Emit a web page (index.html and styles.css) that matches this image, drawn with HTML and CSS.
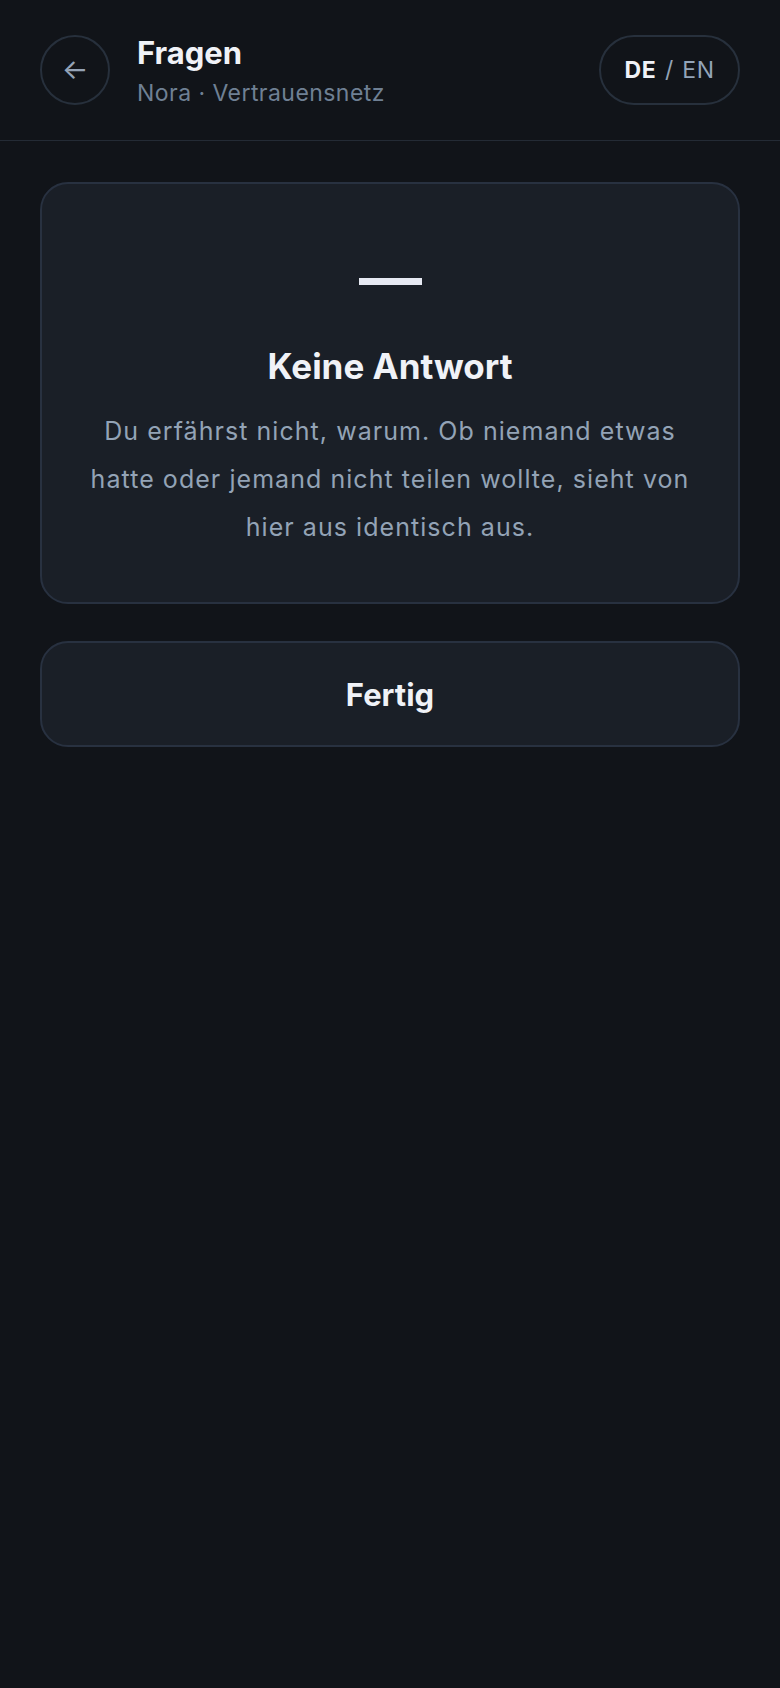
FILE: index.html
```html
<!DOCTYPE html>
<html lang="de">
<head>
    <meta charset="UTF-8">
    <title>Fragen</title>
    <link rel="stylesheet" href="styles.css">
</head>
<body>

<!-- ===================== KOPFZEILE ===================== -->
<header class="topbar">
    <button class="back-btn" aria-label="Zurück">←</button>
    <div class="title-block">
        <h1>Fragen</h1>
        <p class="subtitle">Nora · Vertrauensnetz</p>
    </div>
    <button class="lang-switch"><b>DE</b> / EN</button>
</header>

<!-- ===================== INHALT ===================== -->
<main class="content">
    <div class="card">
        <div class="dash"></div>
        <h2>Keine Antwort</h2>
        <p>Du erfährst nicht, warum. Ob niemand etwas hatte oder jemand nicht teilen wollte, sieht von hier aus identisch aus.</p>
    </div>
    <button class="done-btn">Fertig</button>
</main>

</body>
</html>
```

FILE: styles.css
```css
body {
    margin: 0;
    background: #111419;
    color: #f0f2f7;
    font-family: Inter, "Noto Sans", sans-serif;
    min-height: 1688px;
}

button { font-family: inherit; cursor: pointer; }

.topbar {
    display: flex;
    align-items: center;
    gap: 27px;
    padding: 33px 40px;
    border-bottom: 1px solid #242b35;
}

.back-btn {
    width: 70px;
    height: 70px;
    flex: none;
    border-radius: 50%;
    border: 2px solid #27303c;
    background: transparent;
    color: #95a3b6;
    font-size: 28px;
    line-height: 1;
    padding: 0 0 2px;
}

.title-block { flex: 1; }
.title-block h1 { margin: 0; font-size: 31px; line-height: 40px; font-weight: 700; }
.subtitle { margin: 6px 0 0; font-size: 23px; line-height: 28px; letter-spacing: 0.45px; color: #6f8094; }

.lang-switch {
    height: 70px;
    padding: 0 23px;
    border-radius: 35px;
    border: 2px solid #27303c;
    background: transparent;
    color: #93a4b8;
    font-size: 23px;
    letter-spacing: 0.8px;
    word-spacing: 1px;
}
.lang-switch b { color: #f0f2f7; font-weight: 700; }

.content {
    padding: 41px 40px;
    display: flex;
    flex-direction: column;
    gap: 37px;
}

.card {
    background: #1a1f27;
    border: 2px solid #283140;
    border-radius: 28px;
    padding: 47px 44px 51px;
    text-align: center;
}

.dash {
    width: 63px;
    height: 7px;
    background: #e6e9f2;
    margin: 47px auto 61px;
}

.card h2 { margin: 0; font-size: 35px; line-height: 40px; font-weight: 700; }
.card p { margin: 21px 0 0; font-size: 25px; line-height: 48px; letter-spacing: 1.05px; color: #93a3b6; }

.done-btn {
    height: 106px;
    background: #1a1f27;
    border: 2px solid #283140;
    border-radius: 28px;
    color: #f0f2f7;
    font-size: 31px;
    font-weight: 700;
}
```
